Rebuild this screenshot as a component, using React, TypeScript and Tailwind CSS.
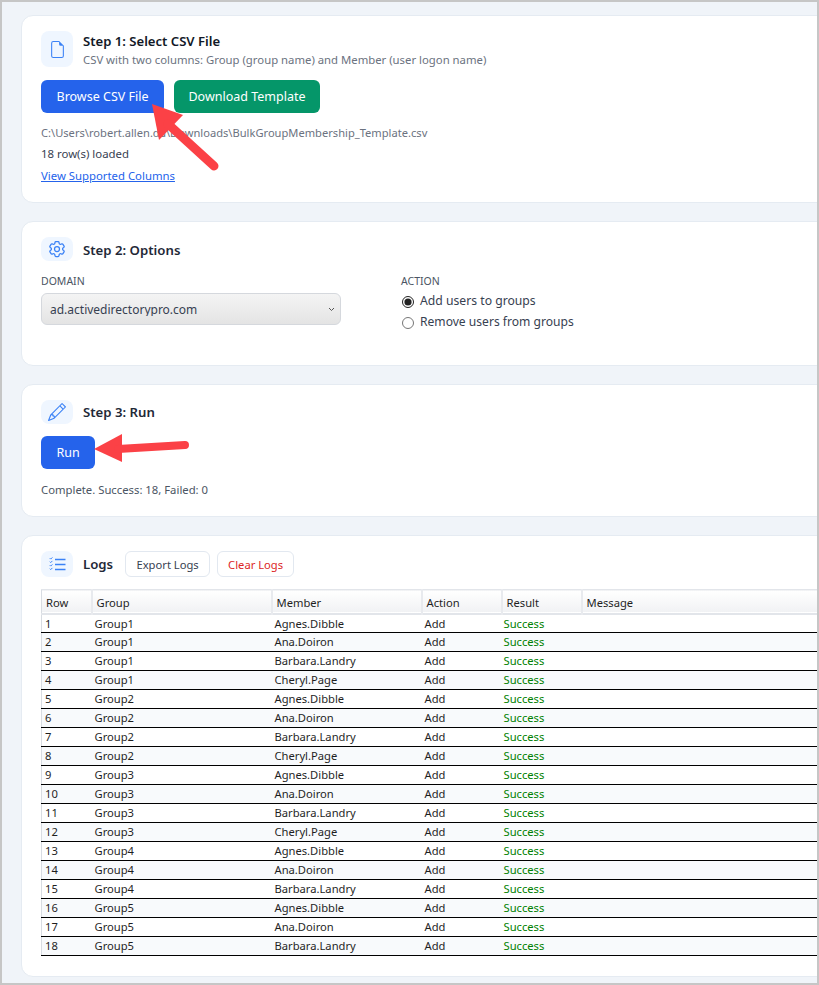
import React from "react";
import { BsFileEarmark, BsPencil } from "react-icons/bs";
import { HiOutlineCog6Tooth } from "react-icons/hi2";

type LogRow = { group: string; member: string };

const members = ["Agnes.Dibble", "Ana.Doiron", "Barbara.Landry", "Cheryl.Page"];

const rows: LogRow[] = [
  ...members.map((member) => ({ group: "Group1", member })),
  ...members.map((member) => ({ group: "Group2", member })),
  ...members.map((member) => ({ group: "Group3", member })),
  ...members.slice(0, 3).map((member) => ({ group: "Group4", member })),
  ...members.slice(0, 3).map((member) => ({ group: "Group5", member })),
];

const headers = [
  { label: "Row", width: "w-[50px]" },
  { label: "Group", width: "w-[180px]" },
  { label: "Member", width: "w-[150px]" },
  { label: "Action", width: "w-[80px]" },
  { label: "Result", width: "w-[80px]" },
  { label: "Message", width: "w-[300px]" },
];

const IconBox = ({ children, className }: { children: React.ReactNode; className: string }) => (
  <div
    className={`flex w-8 shrink-0 items-center justify-center rounded-lg bg-[#eff6ff] text-[#3b82f6] ${className}`}
  >
    {children}
  </div>
);

const Card = ({ className, children }: { className: string; children: React.ReactNode }) => (
  <section
    className={`w-[830px] rounded-l-xl border border-[#e5ebf2] bg-white pl-[19px] ${className}`}
  >
    {children}
  </section>
);

export default function App() {
  return (
    <div className="relative h-[985px] w-[819px] overflow-hidden border-2 border-[#c6c6c6] bg-[#f0f4f9] font-['Noto_Sans','Open_Sans',sans-serif] text-[12px] leading-none text-[#1f2937]">
      <div className="flex flex-col gap-[18px] pl-[19px] pt-[13px]">
        {/* Step 1 */}
        <Card className="h-[188px] pt-[15px]">
          <div className="flex items-start gap-[10px]">
            <IconBox className="h-9">
              <BsFileEarmark className="h-[17px] w-[17px]" />
            </IconBox>
            <div className="pt-[2px]">
              <h2 className="text-[13.1px] font-semibold leading-[16px] text-[#111827]">Step 1: Select CSV File</h2>
              <p className="mt-[4px] text-[11.33px] leading-[14px] text-[#6b7280]">
                CSV with two columns: Group (group name) and Member (user logon name)
              </p>
            </div>
          </div>
          <div className="mt-[13px] flex gap-[10px]">
            <button className="h-[33px] w-[123px] rounded-md bg-[#2563eb] pt-[2px] text-[12.5px] font-normal text-white">
              Browse CSV File
            </button>
            <button className="h-[33px] w-[146px] rounded-md bg-[#059669] pt-[2px] text-[12.5px] font-normal text-white">
              Download Template
            </button>
          </div>
          <p className="mt-[13px] text-[11.13px] leading-[14px] text-[#6b7280]">
            C:\Users\robert.allen.da\Downloads\BulkGroupMembership_Template.csv
          </p>
          <p className="mt-[7px] text-[11.4px] leading-[14px] text-[#374151]">18 row(s) loaded</p>
          <a className="mt-[8px] block text-[11.35px] leading-[14px] text-[#2563eb] underline">View Supported Columns</a>
        </Card>

        {/* Step 2 */}
        <Card className="h-[145px] pt-[15px]">
          <div className="flex items-center gap-[10px]">
            <IconBox className="h-[24px]">
              <HiOutlineCog6Tooth className="h-[20px] w-[20px]" />
            </IconBox>
            <h2 className="pt-[4px] text-[13.2px] font-semibold text-[#1f2937]">Step 2: Options</h2>
          </div>
          <div className="mt-[13px] flex">
            <div className="w-[360px]">
              <label className="block text-[10.5px] leading-[14px] text-[#4b5563]">DOMAIN</label>
              <div className="relative mt-[5px] w-[300px]">
                <select className="h-[32px] w-full appearance-none rounded-md border border-[#d5d8dd] bg-gradient-to-b from-[#f4f4f4] to-[#e4e4e4] pl-2 pt-[1px] text-[12px] text-[#374151]">
                  <option>ad.activedirectorypro.com</option>
                </select>
                <svg className="absolute right-[6px] top-[14px] h-[5px] w-[7px]" viewBox="0 0 7 5" fill="none" stroke="#555" strokeWidth="1">
                  <path d="M1 1l2.5 2.5L6 1" />
                </svg>
              </div>
            </div>
            <div>
              <label className="block text-[10.5px] leading-[14px] text-[#4b5563]">ACTION</label>
              <label className="mt-[3px] flex h-[21px] items-center gap-[6px] pl-[1px] text-[12.2px] text-[#374151]">
                <input type="radio" name="action" defaultChecked className="m-0 h-[12px] w-[12px] accent-[#222]" />
                Add users to groups
              </label>
              <label className="flex h-[21px] items-center gap-[6px] pl-[1px] text-[12.1px] text-[#374151]">
                <input type="radio" name="action" className="m-0 h-[12px] w-[12px] accent-[#222]" />
                Remove users from groups
              </label>
            </div>
          </div>
        </Card>

        {/* Step 3 */}
        <Card className="h-[133px] pt-[15px]">
          <div className="flex items-center gap-[10px]">
            <IconBox className="h-[24px]">
              <BsPencil className="h-[18px] w-[18px]" />
            </IconBox>
            <h2 className="pt-[2px] text-[13.2px] font-semibold text-[#1f2937]">Step 3: Run</h2>
          </div>
          <button className="mt-[12px] h-[33px] w-[54px] rounded-md bg-[#2563eb] pt-[2px] text-[12.5px] font-normal text-white">Run</button>
          <p className="mt-[14px] text-[11.3px] leading-[14px] text-[#4b5563]">Complete. Success: 18, Failed: 0</p>
        </Card>

        {/* Logs */}
        <Card className="h-[442px] pt-[15px]">
          <div className="flex items-center gap-[10px]">
            <IconBox className="h-[26px]">
              <svg className="h-[14px] w-[17px]" viewBox="0 0 17 14" fill="none" stroke="currentColor">
                <path strokeWidth="1.3" d="M6 2.5h10.5M6 7.5h10.5M6 12.5h10.5" />
                <path strokeWidth="1" d="M.8 1.2l.9.9L3.4.4M.8 4.7l.9.9 1.7-1.7M.8 8.2l.9.9 1.7-1.7M.8 11.7l.9.9 1.7-1.7" />
              </svg>
            </IconBox>
            <h2 className="pt-[2px] text-[13.2px] font-semibold text-[#1f2937]">Logs</h2>
            <button className="ml-[2px] h-[26px] w-[85px] rounded-md border border-[#e2e8f0] bg-white pt-[2px] text-[11.2px] text-[#374151]">Export Logs</button>
            <button className="ml-[-3px] h-[26px] w-[77px] rounded-md border border-[#e2e8f0] bg-white pt-[2px] text-[11.2px] text-[#dc2626]">Clear Logs</button>
          </div>
          <table className="mt-[12px] w-[800px] table-fixed border-collapse border-l border-[#d8dce2] text-[11.2px] text-[#1f1f1f]">
            <thead>
              <tr className="h-[24px] border-t border-b-2 border-[#e2e5ea] bg-gradient-to-b from-white to-[#f1f2f4]">
                {headers.map((h) => (
                  <th key={h.label} className={`${h.width} border-r-2 border-[#e8eaee] pl-[4px] pt-[2px] text-left font-normal`}>
                    {h.label}
                  </th>
                ))}
              </tr>
            </thead>
            <tbody>
              {rows.map((row, i) => (
                <tr key={i} className={`h-[19px] border-b border-black ${i % 2 === 1 ? "bg-[#f8fafc]" : "bg-white"}`}>
                  <td className="pl-[3px]">{i + 1}</td>
                  <td className="pl-[3px]">{row.group}</td>
                  <td className="pl-[3px]">{row.member}</td>
                  <td className="pl-[3px]">Add</td>
                  <td className="pl-[2px] text-[#008000]">Success</td>
                  <td />
                </tr>
              ))}
            </tbody>
          </table>
        </Card>
      </div>

      {/* Annotation arrows */}
      <svg className="absolute left-[-2px] top-[-2px] h-[985px] w-[819px]" viewBox="0 0 819 985" fill="#fb4146">
        <path d="M152 104l31 11-24 25z" />
        <path d="M168 124l46 42" stroke="#fb4146" strokeWidth="9" strokeLinecap="round" />
        <path d="M94 449l28-15v28z" />
        <path d="M118 449l67-4" stroke="#fb4146" strokeWidth="8" strokeLinecap="round" />
      </svg>
    </div>
  );
}
